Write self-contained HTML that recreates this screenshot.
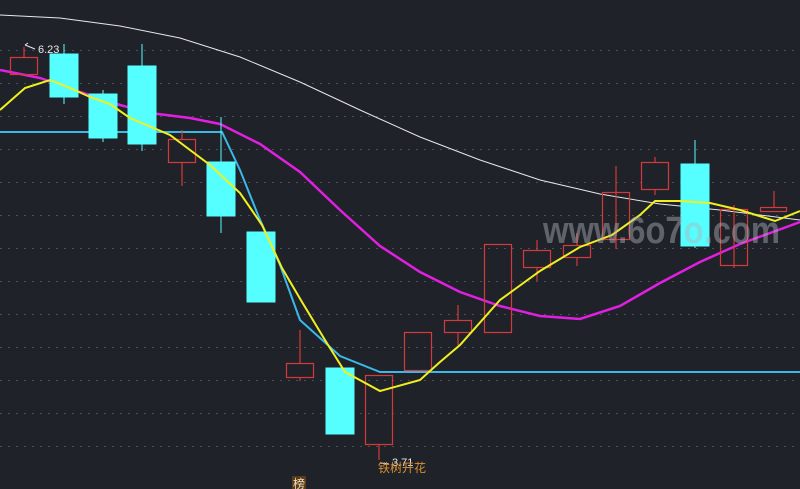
<!DOCTYPE html><html><head><style>
body{margin:0;background:#1f2229;width:800px;height:489px;overflow:hidden;position:relative;font-family:"Liberation Sans","Noto Sans CJK SC",sans-serif}
svg{position:absolute;left:0;top:0}
</style></head><body>
<svg width="800" height="489" xmlns="http://www.w3.org/2000/svg">
<g stroke="#4a4e57" stroke-width="1" stroke-dasharray="2,6">
<line x1="0" y1="50.5" x2="800" y2="50.5"/><line x1="0" y1="83.5" x2="800" y2="83.5"/><line x1="0" y1="116.5" x2="800" y2="116.5"/><line x1="0" y1="149.5" x2="800" y2="149.5"/><line x1="0" y1="182.5" x2="800" y2="182.5"/><line x1="0" y1="215.5" x2="800" y2="215.5"/><line x1="0" y1="248.5" x2="800" y2="248.5"/><line x1="0" y1="281.5" x2="800" y2="281.5"/><line x1="0" y1="314.5" x2="800" y2="314.5"/><line x1="0" y1="347.5" x2="800" y2="347.5"/><line x1="0" y1="380.5" x2="800" y2="380.5"/><line x1="0" y1="413.5" x2="800" y2="413.5"/><line x1="0" y1="446.5" x2="800" y2="446.5"/>
</g>
<polyline fill="none" stroke="#e8e8e8" stroke-width="1" points="0,15 60,18 120,26 180,38 240,57 300,82 360,110 420,137 480,160 540,180 600,194 660,204 720,210 800,220"/>
<polyline fill="none" stroke="#e020e0" stroke-width="2.5" points="0,70 40,78 80,92 120,105 150,113 190,118 220,124 260,144 300,172 340,210 380,246 420,272 460,292 500,306 540,316 580,319 620,306 660,283 700,262 740,244 800,222"/>
<polyline fill="none" stroke="#3ab8e8" stroke-width="2" points="0,132 222,132 240,170 258,215 280,265 300,320 340,356 380,372 800,372"/>
<g stroke="#d43a3a" stroke-width="1.2" fill="none">
<line x1="24" y1="47" x2="24" y2="57"/><rect x="10.5" y="57.5" width="27" height="17"/>
<line x1="182" y1="130" x2="182" y2="186"/><rect x="168.5" y="139.5" width="27" height="23" fill="#1f2229"/>
<line x1="300" y1="330" x2="300" y2="381"/><rect x="286.5" y="363.5" width="27" height="14" fill="#1f2229"/>
<line x1="379" y1="444" x2="379" y2="460"/><rect x="365.5" y="375.5" width="27" height="69"/>
<rect x="404.5" y="332.5" width="27" height="38"/>
<line x1="458" y1="305" x2="458" y2="345"/><rect x="444.5" y="320.5" width="27" height="12" fill="#1f2229"/>
<rect x="484.5" y="244.5" width="27" height="88"/>
<line x1="537" y1="240" x2="537" y2="281"/><rect x="523.5" y="250.5" width="27" height="17" fill="#1f2229"/>
<line x1="577" y1="233" x2="577" y2="266"/><rect x="563.5" y="245.5" width="27" height="12" fill="#1f2229"/>
<line x1="616" y1="166" x2="616" y2="249"/><rect x="602.5" y="192.5" width="27" height="47"/>
<line x1="655" y1="157" x2="655" y2="195"/><rect x="641.5" y="162.5" width="27" height="27" fill="#1f2229"/>
<line x1="734" y1="205" x2="734" y2="268"/><rect x="720.5" y="209.5" width="27" height="56"/>
<line x1="774" y1="191" x2="774" y2="212"/><rect x="760.5" y="207.5" width="26" height="4" fill="#1f2229"/>
</g>
<g fill="#55ffff" stroke="#55ffff" stroke-width="1">
<line x1="64" y1="44" x2="64" y2="104"/><rect x="50" y="54" width="28" height="43"/>
<line x1="103" y1="90" x2="103" y2="142"/><rect x="89" y="94" width="28" height="44"/>
<line x1="142" y1="44" x2="142" y2="151"/><rect x="128" y="66" width="28" height="78"/>
<line x1="221" y1="117" x2="221" y2="233"/><rect x="207" y="162" width="28" height="54"/>
<rect x="247" y="232" width="28" height="70"/>
<rect x="326" y="368" width="28" height="66"/>
<line x1="695" y1="140" x2="695" y2="248"/><rect x="681" y="164" width="28" height="82"/>
</g>
<polyline fill="none" stroke="#f0f020" stroke-width="2" points="0,110 25,88 50,80 70,88 90,97 110,104 130,118 170,135 210,165 240,193 262,225 282,268 302,302 325,340 345,372 380,391 420,380 440,362 460,345 500,300 540,271 580,247 612,235 640,215 655,201 680,201 710,203 740,210 775,221 800,211"/>
<text x="543" y="243" font-size="38" font-weight="bold" textLength="237" lengthAdjust="spacingAndGlyphs" fill="#b0b3ba" fill-opacity="0.45" font-family="Liberation Sans, sans-serif">www.6o7o.com</text>
<text x="38" y="53" font-size="11" fill="#e8e8e8">6.23</text>
<path d="M25 45 l3 -2 M25 45 l10 4" stroke="#e8e8e8" stroke-width="1" fill="none"/>
<text x="392" y="466" font-size="11" fill="#e8e8e8">3.71</text>
<path d="M381 463 l8 1" stroke="#e8e8e8" stroke-width="1"/>
<text x="378" y="472" font-size="12" fill="#d89030" font-family="Noto Sans CJK SC, sans-serif">铁树开花</text>
<rect x="292" y="476" width="14" height="13" fill="#5a3a18"/>
<text x="293" y="488" font-size="12" fill="#f0e0c0" font-family="Noto Sans CJK SC, sans-serif">榜</text>
</svg>
</body></html>
